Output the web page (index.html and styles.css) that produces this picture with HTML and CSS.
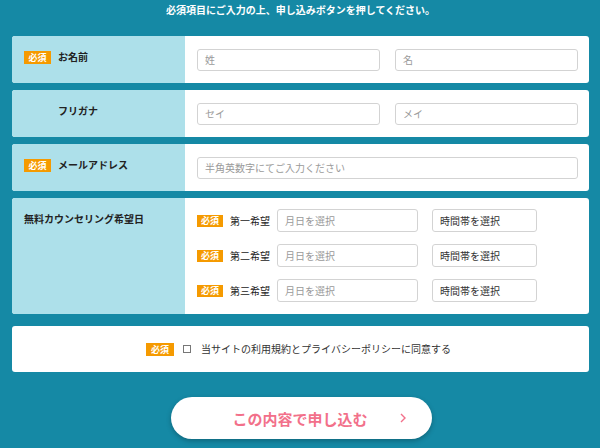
FILE: index.html
```html
<!DOCTYPE html>
<html lang="ja">
<head>
<meta charset="utf-8">
<title>お申し込みフォーム</title>
<link rel="stylesheet" href="styles.css">
</head>
<body>
<div class="page">
  <p class="lead">必須項目にご入力の上、申し込みボタンを押してください。</p>
  <div class="form">
    <div class="card">
      <div class="label"><span class="badge">必須</span><span class="ltext">お名前</span></div>
      <div class="field">
        <div class="pair"><span class="input">姓</span><span class="input">名</span></div>
      </div>
    </div>
    <div class="card">
      <div class="label"><span class="badge hidden">必須</span><span class="ltext">フリガナ</span></div>
      <div class="field">
        <div class="pair"><span class="input">セイ</span><span class="input">メイ</span></div>
      </div>
    </div>
    <div class="card">
      <div class="label"><span class="badge">必須</span><span class="ltext">メールアドレス</span></div>
      <div class="field">
        <span class="input full">半角英数字にてご入力ください</span>
      </div>
    </div>
    <div class="card">
      <div class="label"><span class="ltext">無料カウンセリング希望日</span></div>
      <div class="field dates">
        <div class="daterow"><span class="badge">必須</span><span class="dname">第一希望</span><span class="input date">月日を選択</span><span class="input time">時間帯を選択</span></div>
        <div class="daterow"><span class="badge">必須</span><span class="dname">第二希望</span><span class="input date">月日を選択</span><span class="input time">時間帯を選択</span></div>
        <div class="daterow"><span class="badge">必須</span><span class="dname">第三希望</span><span class="input date">月日を選択</span><span class="input time">時間帯を選択</span></div>
      </div>
    </div>
    <div class="card agree">
      <span class="badge">必須</span><span class="check"></span><span class="atext">当サイトの利用規約とプライバシーポリシーに同意する</span>
    </div>
  </div>
  <div class="btnwrap">
    <div class="btn">この内容で申し込む
      <svg class="chev" width="8" height="12" viewBox="0 0 8 12"><polyline points="2,2 6,6 2,10" fill="none" stroke="#f2708a" stroke-width="1.4"/></svg>
    </div>
  </div>
</div>
</body>
</html>
```
FILE: styles.css
```css
* { box-sizing: border-box; }
html, body { margin: 0; padding: 0; }
body {
  background: #1589a5;
  font-family: "Noto Sans CJK JP", "Noto Sans", sans-serif;
  width: 600px;
  height: 448px;
  overflow: hidden;
}
.page { padding: 0 11px 0 12px; }
.lead {
  margin: 0;
  padding-top: 3px;
  height: 36px;
  text-align: center;
  color: #fff;
  font-size: 10px;
  font-weight: bold;
  line-height: 14px;
}
.form { display: flex; flex-direction: column; gap: 7px; }
.card {
  display: grid;
  grid-template-columns: 173px 1fr;
  background: #fff;
  border-radius: 3px;
  overflow: hidden;
}
.label {
  background: #ade0ea;
  display: flex;
  align-self: stretch;
  padding: 14px 0 0 12px;
  align-items: flex-start;
}
.ltext {
  font-size: 10px;
  font-weight: bold;
  color: #222;
  line-height: 14px;
}
.badge {
  display: inline-flex;
  align-items: center;
  justify-content: center;
  width: 27px;
  height: 13px;
  margin: 1px 7px 0 0;
  background: #f59a00;
  color: #fff;
  font-size: 9px;
  font-weight: bold;
  line-height: 1;
  flex: none;
}
.badge.hidden { visibility: hidden; }
.field { padding: 13px 11px 12px 12px; }
.pair { display: flex; gap: 15px; }
.input {
  display: flex;
  align-items: center;
  height: 22px;
  padding: 0 7px;
  background: #fff;
  border: 1px solid #d3d3d3;
  border-radius: 3px;
  color: #9a9a9a;
  font-size: 10px;
  line-height: 1;
}
.pair .input { flex: 1; }
.full { width: 100%; }
.dates { display: flex; flex-direction: column; gap: 12px; padding-top: 11px; }
.daterow { display: flex; align-items: center; height: 23px; }
.daterow .badge { width: 26px; height: 12px; margin: 0; }
.dname {
  width: 54px;
  padding-left: 7px;
  font-size: 10px;
  color: #222;
  line-height: 14px;
}
.input.date { width: 141px; height: 23px; }
.input.time { width: 105px; height: 23px; margin-left: 14px; color: #333; }
.card.agree {
  display: flex;
  align-items: center;
  justify-content: center;
  height: 46px;
  margin-top: 5px;
  padding-right: 4px;
}
.agree .badge { width: 28px; margin: 0; }
.check {
  width: 8px;
  height: 8px;
  border: 1px solid #777;
  margin-left: 9px;
  background: #fff;
}
.atext {
  margin-left: 10px;
  font-size: 10px;
  color: #333;
  line-height: 14px;
}
.btnwrap { display: flex; justify-content: center; padding-top: 25px; padding-left: 1px; }
.btn {
  position: relative;
  width: 261px;
  height: 42px;
  border-radius: 21px;
  background: #fff;
  box-shadow: 0 2px 5px rgba(0, 0, 0, 0.25);
  display: flex;
  align-items: center;
  justify-content: center;
  color: #f2708a;
  font-size: 15px;
  font-weight: bold;
  padding-right: 2px;
}
.chev { position: absolute; right: 25px; top: 15px; }
```
